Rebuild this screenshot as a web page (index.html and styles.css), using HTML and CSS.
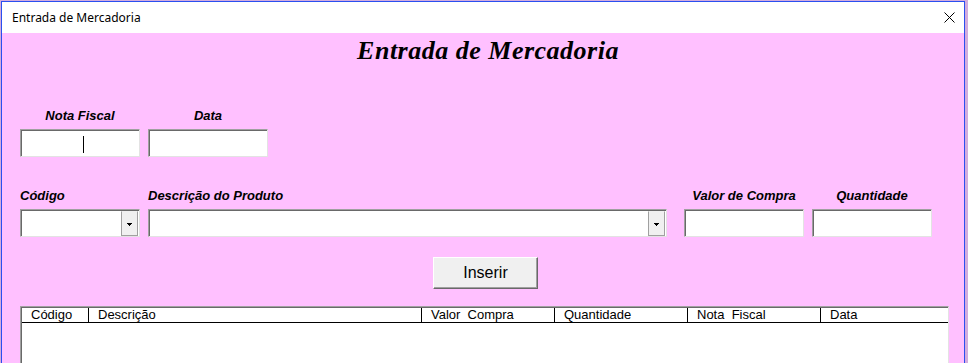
FILE: index.html
```html
<!DOCTYPE html>
<html lang="pt">
<head>
<meta charset="utf-8">
<title>Entrada de Mercadoria</title>
<link rel="stylesheet" href="styles.css">
</head>
<body>
<div class="window">
  <div class="titlebar">
    <span class="title">Entrada de Mercadoria</span>
    <span class="close" aria-label="Fechar">
      <svg width="11" height="11" viewBox="0 0 11 11"><path d="M0.5 0.5 L10.5 10.5 M10.5 0.5 L0.5 10.5" stroke="#000" stroke-width="1" fill="none"/></svg>
    </span>
  </div>
  <div class="client">
    <h1 class="heading">Entrada de Mercadoria</h1>

    <div class="row row-top">
      <div class="field f120 centered">
        <label class="lbl">Nota Fiscal</label>
        <div class="input with-caret"><span class="caret"></span></div>
      </div>
      <div class="field f120 centered">
        <label class="lbl">Data</label>
        <div class="input"></div>
      </div>
    </div>

    <div class="row row-mid">
      <div class="field f120">
        <label class="lbl">Código</label>
        <div class="input combo"><span class="drop"><svg width="5" height="3" viewBox="0 0 5 3"><rect x="0" y="0" width="5" height="1"/><rect x="1" y="1" width="3" height="1"/><rect x="2" y="2" width="1" height="1"/></svg></span></div>
      </div>
      <div class="field fdesc">
        <label class="lbl">Descrição do Produto</label>
        <div class="input combo"><span class="drop"><svg width="5" height="3" viewBox="0 0 5 3"><rect x="0" y="0" width="5" height="1"/><rect x="1" y="1" width="3" height="1"/><rect x="2" y="2" width="1" height="1"/></svg></span></div>
      </div>
      <div class="field f120 centered gap-l">
        <label class="lbl">Valor de Compra</label>
        <div class="input"></div>
      </div>
      <div class="field f120 centered">
        <label class="lbl">Quantidade</label>
        <div class="input"></div>
      </div>
    </div>

    <div class="actions">
      <button class="btn" type="button">Inserir</button>
    </div>

    <div class="list">
      <div class="list-head">
        <span class="col c1">Código</span>
        <span class="col c2">Descrição</span>
        <span class="col c3">Valor&nbsp; Compra</span>
        <span class="col c4">Quantidade</span>
        <span class="col c5">Nota&nbsp; Fiscal</span>
        <span class="col c6">Data</span>
      </div>
    </div>
  </div>
</div>
</body>
</html>
```

FILE: styles.css
```css
html, body {
  margin: 0;
  height: 363px;
  overflow: hidden;
}
body {
  background: #d3acdd;
  padding: 1px 0 0 1px;
  box-sizing: border-box;
}
.window {
  width: 964px;
  height: 362px;
  box-sizing: border-box;
  border: 1px solid #2b4ff0;
  border-bottom: none;
  background: #ffc0ff;
  display: flex;
  flex-direction: column;
  overflow: hidden;
}
.titlebar {
  height: 31px;
  flex: none;
  background: #ffffff;
  display: flex;
  align-items: center;
  justify-content: space-between;
  padding: 0 9px 0 10px;
}
.title {
  font-family: "Noto Sans", "DejaVu Sans", sans-serif;
  font-size: 12px;
  color: #000;
  line-height: 16px;
  margin-top: 1px;
}
.close {
  display: flex;
  width: 11px;
  height: 11px;
  margin-top: -1px;
}
.client {
  flex: 1;
  min-height: 0;
  padding: 0 0 0 18px;
  display: flex;
  flex-direction: column;
}
.heading {
  margin: 3px 0 0 -18px;
  text-align: center;
  padding-left: 10px;
  font-family: "Liberation Serif", "DejaVu Serif", serif;
  font-style: italic;
  font-weight: bold;
  font-size: 26px;
  letter-spacing: 0.5px;
  line-height: 30px;
  color: #000;
}
.row {
  display: flex;
  gap: 8px;
}
.row-top { margin-top: 42px; }
.row-mid { margin-top: 31px; }
.field {
  display: flex;
  flex-direction: column;
  gap: 5px;
}
.f120 { width: 120px; }
.fdesc { width: 519px; }
.gap-l { margin-left: 9px; }
.centered .lbl { text-align: center; }
.lbl {
  font-family: "Liberation Sans", Arial, sans-serif;
  font-weight: bold;
  font-style: italic;
  font-size: 13px;
  line-height: 16px;
  color: #000;
  white-space: nowrap;
}
.input {
  height: 28px;
  box-sizing: border-box;
  background: #ffffff;
  border: 1px solid;
  border-color: #a0a0a0 #e3e3e3 #e3e3e3 #a0a0a0;
  box-shadow: inset 1px 1px 0 #696969;
  display: flex;
  align-items: center;
}
.with-caret { padding-left: 62px; }
.caret {
  width: 1px;
  height: 17px;
  background: #000;
  margin-top: 2px;
}
.combo {
  justify-content: flex-end;
  align-items: stretch;
  padding: 1px 1px 0 0;
}
.drop {
  width: 17px;
  box-sizing: border-box;
  background: #f0f0f0;
  border: 1px solid;
  border-color: #f0f0f0 #a0a0a0 #a0a0a0 #a0a0a0;
  display: flex;
  align-items: center;
  justify-content: center;
}
.drop svg { fill: #000; display: block; margin-top: 1px; }
.actions {
  margin-top: 20px;
  padding-left: 413px;
  display: flex;
}
.btn {
  width: 105px;
  height: 32px;
  box-sizing: border-box;
  margin: 0;
  padding: 0;
  background: #f0f0f0;
  border: 1px solid;
  border-color: #ffffff #696969 #696969 #ffffff;
  box-shadow: inset -1px -1px 0 #a0a0a0;
  font-family: "Liberation Sans", Arial, sans-serif;
  font-size: 16px;
  color: #000;
}
.list {
  margin-top: 17px;
  width: 929px;
  flex: 1;
  min-height: 0;
  box-sizing: border-box;
  background: #ffffff;
  border: 1px solid;
  border-bottom: none;
  border-color: #a0a0a0 #e3e3e3 #e3e3e3 #a0a0a0;
  box-shadow: inset 1px 1px 0 #696969;
  padding: 1px 0 0 1px;
}
.list-head {
  display: flex;
  border-bottom: 1px solid #000;
  height: 15px;
  box-sizing: border-box;
}
.col {
  box-sizing: border-box;
  padding-left: 9px;
  border-right: 1px solid #000;
  font-family: "Liberation Sans", Arial, sans-serif;
  font-size: 13px;
  line-height: 14px;
  color: #000;
  white-space: nowrap;
}
.c1 { width: 67px; }
.c2 { width: 333px; }
.c3 { width: 133px; }
.c4 { width: 133px; }
.c5 { width: 133px; }
.c6 { flex: 1; border-right: none; }
```
